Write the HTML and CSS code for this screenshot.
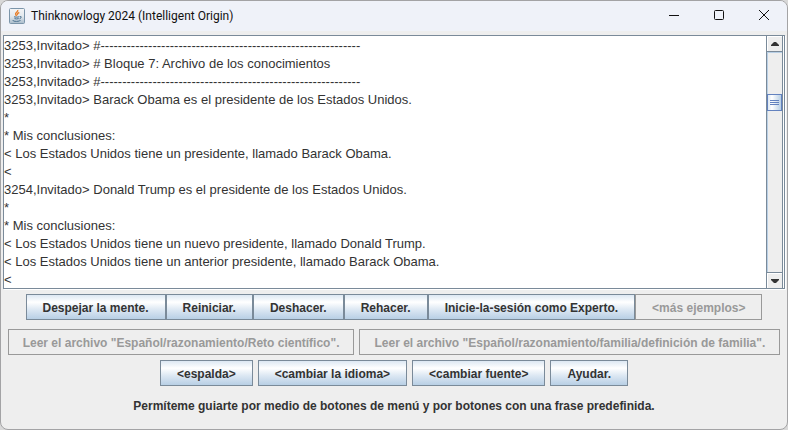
FILE: index.html
```html
<!DOCTYPE html>
<html lang="es">
<head>
<meta charset="utf-8">
<title>Thinknowlogy 2024 (Intelligent Origin)</title>
<link rel="stylesheet" href="styles.css">
</head>
<body>
<div class="window">
  <header class="titlebar">
    <svg class="app-icon" viewBox="0 0 16 16" aria-hidden="true">
      <defs><linearGradient id="tile" x1="0" y1="0" x2="0" y2="1"><stop offset="0" stop-color="#f4f5f6"/><stop offset=".5" stop-color="#e3e9ee"/><stop offset="1" stop-color="#a9bccb"/></linearGradient></defs>
      <rect x=".5" y=".5" width="15" height="15" rx="1" fill="url(#tile)" stroke="#7b95aa"/>
      <path d="M8.7 2C9.5 4 5.6 4.600 6.700 6.500Q7 7.300 7.700 8M10.300 4.500C8.500 5.200 7.800 5.800 8.700 7" fill="none" stroke="#e8812d" stroke-width="1.400"/>
      <path d="M5 8.800Q7.500 9.600 10.200 8.800M5.500 10.600Q7.500 11.300 9.700 10.600M3.800 12Q3.500 13.500 7.500 13.400Q11.500 13.300 11.500 12M10.700 8.600Q13 8.300 12 9.800Q11.500 10.500 10.500 10.800" fill="none" stroke="#4a7190"/>
    </svg>
    <h1 class="title">Thinknowlogy 2024 (Intelligent Origin)</h1>
    <div class="window-controls">
      <button type="button" aria-label="Minimizar"><svg viewBox="0 0 12 12"><path d="M1 5.500H11"/></svg></button>
      <button type="button" aria-label="Maximizar"><svg viewBox="0 0 12 12"><rect x="1.500" y=".5" width="9" height="9" rx="1"/></svg></button>
      <button type="button" aria-label="Cerrar"><svg viewBox="0 0 12 12"><path d="M1 0L11 10M11 0L1 10"/></svg></button>
    </div>
  </header>
  <main class="content">
    <div class="output-pane">
      <textarea class="output" aria-label="Salida" readonly spellcheck="false" rows="14">3253,Invitado&gt; #------------------------------------------------------------
3253,Invitado&gt; # Bloque 7: Archivo de los conocimientos
3253,Invitado&gt; #------------------------------------------------------------
3253,Invitado&gt; Barack Obama es el presidente de los Estados Unidos.
*
* Mis conclusiones:
&lt; Los Estados Unidos tiene un presidente, llamado Barack Obama.
&lt;
3254,Invitado&gt; Donald Trump es el presidente de los Estados Unidos.
*
* Mis conclusiones:
&lt; Los Estados Unidos tiene un nuevo presidente, llamado Donald Trump.
&lt; Los Estados Unidos tiene un anterior presidente, llamado Barack Obama.
&lt;</textarea>
      <div class="scrollbar">
        <button class="arrow arrow-up" type="button" aria-label="Subir"><svg viewBox="0 0 8 4"><path d="M0 4V3L3 0H5L8 3V4Z"/></svg></button>
        <div class="track"><div class="thumb"><i></i><i></i><i></i></div></div>
        <button class="arrow arrow-down" type="button" aria-label="Bajar"><svg viewBox="0 0 8 4"><path d="M0 0V1L3 4H5L8 1V0Z"/></svg></button>
      </div>
    </div>
    <div class="row row-joined">
      <button class="btn" type="button">Despejar la mente.</button>
      <button class="btn" type="button">Reiniciar.</button>
      <button class="btn" type="button">Deshacer.</button>
      <button class="btn" type="button">Rehacer.</button>
      <button class="btn" type="button">Inicie-la-sesión como Experto.</button>
      <button class="btn" type="button" disabled>&lt;más ejemplos&gt;</button>
    </div>
    <div class="row row-files">
      <button class="btn" type="button" disabled>Leer el archivo "Español/razonamiento/Reto científico".</button>
      <button class="btn" type="button" disabled>Leer el archivo "Español/razonamiento/familia/definición de familia".</button>
    </div>
    <div class="row">
      <button class="btn" type="button">&lt;espalda&gt;</button>
      <button class="btn" type="button">&lt;cambiar la idioma&gt;</button>
      <button class="btn" type="button">&lt;cambiar fuente&gt;</button>
      <button class="btn" type="button">Ayudar.</button>
    </div>
    <p class="hint">Permíteme guiarte por medio de botones de menú y por botones con una frase predefinida.</p>
  </main>
</div>
</body>
</html>
```
FILE: styles.css
```css
* { box-sizing: border-box; }
body {
  margin: 0;
  background: #d8d8d8;
  font-family: "Liberation Sans", Arial, sans-serif;
  color: #333;
}
.window {
  min-height: 100vh;
  border: 1px solid #a3a3a5;
  border-radius: 8px;
  background: #eee;
  overflow: hidden;
}
.titlebar {
  display: flex;
  align-items: center;
  height: 30px;
  padding: 0 1px 0 8px;
  background: #eff2f9;
}
.app-icon { width: 16px; height: 16px; }
.title {
  flex: 1;
  margin: 0 0 0 6px;
  font: 12px Roboto, "Noto Sans", sans-serif;
  color: #111;
}
.window-controls { display: flex; }
.window-controls button {
  display: grid;
  place-items: center;
  width: 45px;
  height: 30px;
  padding: 0;
  border: 0;
  background: none;
}
.window-controls svg {
  width: 12px;
  height: 12px;
  fill: none;
  stroke: #111;
}
.content { padding: 4px 2px 0; }
.output-pane {
  display: flex;
  border: 1px solid #7a8a99;
  background: #fff;
  box-shadow: 1px 1px #fff;
}
.output {
  flex: 1;
  min-width: 0;
  height: 252px;
  padding: 1px 0 0;
  border: 0;
  resize: none;
  overflow: hidden;
  outline: 0;
  background: #fff;
  color: #333;
  font: 13px/18px "Liberation Sans", Arial, sans-serif;
}
.scrollbar {
  display: flex;
  flex-direction: column;
  width: 17px;
  margin-right: 1px;
  border: 1px solid #7a8a99;
  border-width: 0 1px 0 1px;
  background: #eee;
}
.arrow {
  display: grid;
  place-items: center;
  height: 16px;
  padding: 0;
  border: 0 solid #7a8a99;
  background: #eee;
  box-shadow: inset 1px 1px #fff;
}
.arrow-up { border-bottom-width: 1px; }
.arrow-down { border-top-width: 1px; }
.arrow svg { width: 8px; height: 4px; fill: #333; }
.track {
  flex: 1;
  padding-top: 42px;
  box-shadow: inset 1px 1px #b8cfe5;
}
.thumb {
  display: flex;
  flex-direction: column;
  align-items: center;
  justify-content: center;
  gap: 1px;
  height: 17px;
  border: 1px solid #6382bf;
  background: linear-gradient(to right, #dde8f3, #fff 30%, #b8cfe5);
}
.thumb i { width: 9px; height: 1px; background: #6382bf; }
.row {
  display: flex;
  justify-content: center;
  gap: 5px;
  margin-top: 5px;
}
.row-joined { gap: 0; }
.row-files { margin-top: 9px; }
.btn {
  height: 26px;
  padding: 2px 16px 0;
  border: 1px solid #7a8a99;
  background: linear-gradient(#dde8f3, #fff 30%, #dde8f3 60%, #b8cfe5);
  color: #333;
  font: bold 12px "Liberation Sans", Arial, sans-serif;
  white-space: nowrap;
}
.btn:disabled {
  border-color: #999;
  background: #eee;
  color: #999;
}
.row-files .btn { padding: 2px 14px 0; }
.hint {
  margin: 12px 0 0;
  font-size: 12px;
  font-weight: bold;
  line-height: 16px;
  text-align: center;
}
```
